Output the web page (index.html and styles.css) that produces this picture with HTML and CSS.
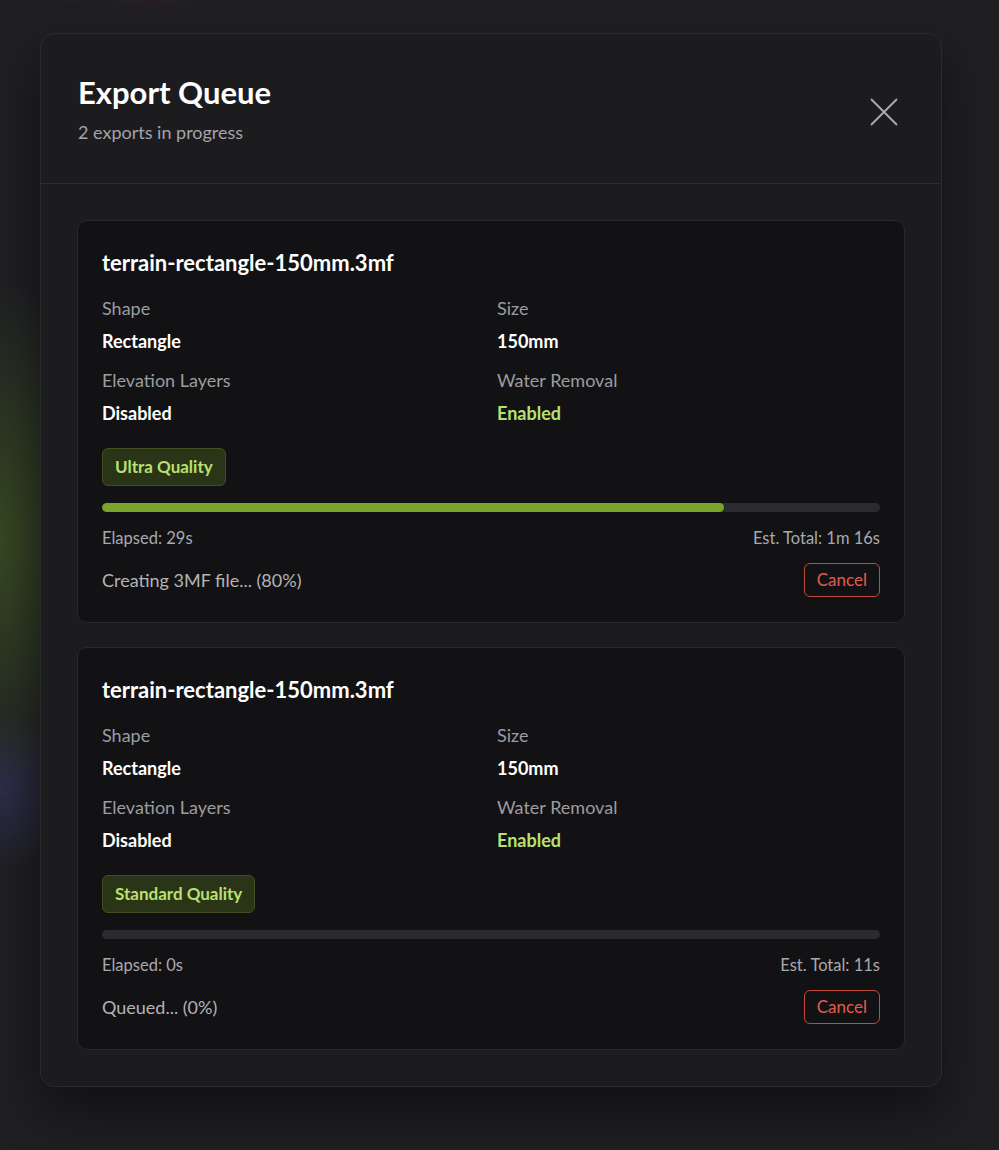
FILE: index.html
```html
<!DOCTYPE html>
<html lang="en">
<head>
  <meta charset="UTF-8">
  <meta name="viewport" content="width=device-width, initial-scale=1.0">
  <title>Export Queue</title>
  <link rel="stylesheet" href="styles.css">
</head>
<body>
  <div class="backdrop">
    <div class="modal">
      <div class="modal_header">
        <div>
          <h2 class="modal_title">Export Queue</h2>
          <p class="modal_sub">2 exports in progress</p>
        </div>
        <button type="button" class="close_btn">
          <svg width="30" height="30" viewBox="0 0 30 30"><path d="M2 2 L28 28 M28 2 L2 28" stroke="#a9a9ad" stroke-width="2" fill="none"/></svg>
        </button>
      </div>
      <div class="modal_body">
        <div class="job">
          <h3 class="job_name">terrain-rectangle-150mm.3mf</h3>
          <div class="specs">
            <div class="spec"><span class="spec_label">Shape</span><span class="spec_value">Rectangle</span></div>
            <div class="spec"><span class="spec_label">Size</span><span class="spec_value">150mm</span></div>
            <div class="spec"><span class="spec_label">Elevation Layers</span><span class="spec_value">Disabled</span></div>
            <div class="spec"><span class="spec_label">Water Removal</span><span class="spec_value on">Enabled</span></div>
          </div>
          <span class="badge">Ultra Quality</span>
          <div class="bar"><div class="bar_fill" style="width: 80%"></div></div>
          <div class="times"><span>Elapsed: 29s</span><span>Est. Total: 1m 16s</span></div>
          <div class="status_row">
            <span class="status">Creating 3MF file... (80%)</span>
            <button type="button" class="cancel_btn">Cancel</button>
          </div>
        </div>
        <div class="job">
          <h3 class="job_name">terrain-rectangle-150mm.3mf</h3>
          <div class="specs">
            <div class="spec"><span class="spec_label">Shape</span><span class="spec_value">Rectangle</span></div>
            <div class="spec"><span class="spec_label">Size</span><span class="spec_value">150mm</span></div>
            <div class="spec"><span class="spec_label">Elevation Layers</span><span class="spec_value">Disabled</span></div>
            <div class="spec"><span class="spec_label">Water Removal</span><span class="spec_value on">Enabled</span></div>
          </div>
          <span class="badge">Standard Quality</span>
          <div class="bar"><div class="bar_fill" style="width: 0%"></div></div>
          <div class="times"><span>Elapsed: 0s</span><span>Est. Total: 11s</span></div>
          <div class="status_row">
            <span class="status">Queued... (0%)</span>
            <button type="button" class="cancel_btn">Cancel</button>
          </div>
        </div>
      </div>
    </div>
  </div>
</body>
</html>
```

FILE: styles.css
```css
*{
  margin: 0;
  padding: 0;
  box-sizing: border-box;
}
body{
  font-family: "Segoe UI", Lato, "Noto Sans", sans-serif;
  color: #fff;
  background-color: #1f1f22;
  background-image:
    radial-gradient(ellipse 110px 260px at 0px 540px, rgba(70, 100, 35, 0.6), transparent),
    radial-gradient(ellipse 80px 80px at 0px 790px, rgba(60, 60, 125, 0.45), transparent),
    radial-gradient(ellipse 90px 14px at 150px 0px, rgba(60, 30, 40, 0.2), transparent);
  min-height: 1150px;
}
.backdrop{
  padding: 33px 58px 40px 40px;
}
.modal{
  width: 902px;
  background-color: #1c1c1f;
  border: 1px solid #2b2b2f;
  border-radius: 14px;
  box-shadow: 0 24px 50px rgba(0, 0, 0, 0.45);
}
.modal_header{
  display: flex;
  justify-content: space-between;
  align-items: center;
  padding: 40px 42px 39px 37px;
  border-bottom: 1px solid #2d2d31;
}
.modal_title{
  font-size: 31px;
  line-height: 36px;
  font-weight: 700;
}
.modal_sub{
  margin-top: 10px;
  font-size: 18px;
  line-height: 24px;
  color: #a3a3a8;
}
.close_btn{
  background: transparent;
  border: none;
  width: 30px;
  height: 30px;
  margin-top: 6px;
}
.modal_body{
  padding: 36px;
  display: flex;
  flex-direction: column;
  gap: 24px;
}
.job{
  background-color: #121214;
  border: 1px solid #29292d;
  border-radius: 10px;
  padding: 24px 24px 25px;
  display: flex;
  flex-direction: column;
  align-items: flex-start;
}
.job_name{
  font-size: 22px;
  line-height: 36px;
  font-weight: 700;
}
.specs{
  width: 100%;
  margin-top: 15px;
  display: grid;
  grid-template-columns: 1fr 1fr;
  column-gap: 12px;
  row-gap: 15px;
}
.spec{
  display: flex;
  flex-direction: column;
  gap: 9px;
}
.spec_label{
  font-size: 18px;
  line-height: 24px;
  color: #9c9ca1;
}
.spec_value{
  font-size: 18px;
  line-height: 24px;
  font-weight: 700;
}
.spec_value.on{
  color: #b9e070;
}
.badge{
  margin-top: 23px;
  padding: 6px 12px;
  font-size: 17px;
  line-height: 24px;
  font-weight: 700;
  color: #b9e070;
  background-color: #2a3417;
  border: 1px solid #424f21;
  border-radius: 6px;
}
.bar{
  width: 100%;
  height: 9px;
  margin-top: 17px;
  background-color: #2b2b2f;
  border-radius: 5px;
  overflow: hidden;
}
.bar_fill{
  height: 100%;
  background-color: #7ba42b;
  border-radius: 5px;
}
.times{
  width: 100%;
  margin-top: 14px;
  display: flex;
  justify-content: space-between;
  font-size: 16.5px;
  line-height: 24px;
  color: #a9a9ae;
}
.status_row{
  width: 100%;
  margin-top: 13px;
  display: flex;
  justify-content: space-between;
  align-items: center;
}
.status{
  font-size: 18px;
  color: #b3b3b8;
}
.cancel_btn{
  font-family: inherit;
  font-size: 17px;
  line-height: 24px;
  color: #e35b4c;
  background: transparent;
  border: 1px solid #c14a3e;
  border-radius: 6px;
  padding: 4px 12px;
}
```
